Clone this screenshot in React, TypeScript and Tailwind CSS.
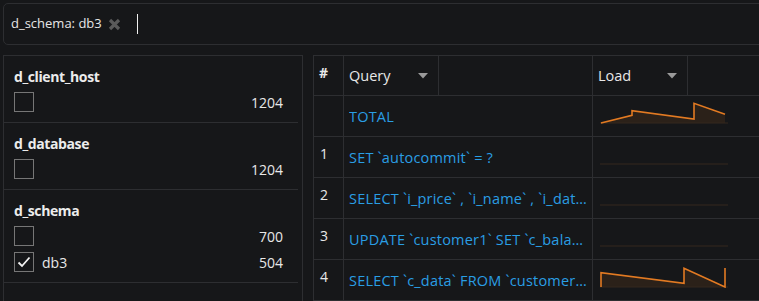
import React from "react";

const font = { fontFamily: '"Open Sans", "Noto Sans", sans-serif' };

type Facet = { title: string; rows: { label?: string; count: number; checked?: boolean }[] };

const facets: Facet[] = [
  { title: "d_client_host", rows: [{ count: 1204 }] },
  { title: "d_database", rows: [{ count: 1204 }] },
  { title: "d_schema", rows: [{ count: 700 }, { label: "db3", count: 504, checked: true }] },
];

type Row = { num?: number; query: string; line?: string; fill?: string };

const rows: Row[] = [
  {
    query: "TOTAL",
    line: "M2 21 L33 13.3 L33 8.7 L95 17 L95 1.3 L126 12.3",
    fill: "2,21 33,13.3 33,8.7 95,17 95,1.3 126,12.3 126,21",
  },
  { num: 1, query: "SET `autocommit` = ?" },
  { num: 2, query: "SELECT `i_price` , `i_name` , `i_data` FROM `item1` WHERE `i_id` = ?" },
  { num: 3, query: "UPDATE `customer1` SET `c_balance` = ? WHERE `c_w_id` = ?" },
  {
    num: 4,
    query: "SELECT `c_data` FROM `customer1` WHERE `c_w_id` = ?",
    line: "M2 21 L2 6.7 L85 17.3 L85 2.3 L126 21 L126 2",
    fill: "2,21 2,6.7 85,17.3 85,2.3 126,21",
  },
];

function Checkbox({ checked }: { checked?: boolean }) {
  return (
    <div className="w-[20px] h-[20px] border border-[#767676] flex items-center justify-center shrink-0">
      {checked && (
        <svg width="16" height="16" viewBox="0 0 16 16">
          <path d="M2.5 8.5 L6 12 L13.5 3.5" fill="none" stroke="#f2f2f2" strokeWidth="1.8" />
        </svg>
      )}
    </div>
  );
}

function Caret() {
  return (
    <svg width="10" height="6" viewBox="0 0 10 6" className="shrink-0">
      <path d="M0 0 L10 0 L5 5.5 Z" fill="#9a9a9a" />
    </svg>
  );
}

function Sparkline({ line, fill }: { line?: string; fill?: string }) {
  return (
    <svg width="130" height="22" viewBox="0 0 130 22" className="ml-[6px] mt-[6px]">
      {fill && <polygon points={fill} fill="#2b2119" />}
      <line x1="1" y1="21" x2="129" y2="21" stroke="#35291f" strokeWidth="1" />
      {line && <path d={line} fill="none" stroke="#e27a22" strokeWidth="1.6" strokeLinejoin="miter" />}
    </svg>
  );
}

export default function App() {
  return (
    <div className="w-[759px] h-[301px] overflow-hidden bg-[#161719] text-[#e8e8e8]" style={font}>
      {/* Filter bar */}
      <div className="ml-[3px] mt-[3px] w-[800px] h-[42px] border border-[#2d2e31] rounded-[5px] flex items-center pl-[7px]">
        <span className="text-[13px] text-[#e6e6e6]">d_schema: db3</span>
        <svg width="13" height="13" viewBox="0 0 13 13" className="ml-[6px]">
          <path d="M2 2 L11 11 M11 2 L2 11" stroke="#5a5a5a" strokeWidth="3.2" />
        </svg>
        <div className="ml-[16px] w-[1px] h-[20px] bg-[#f0f0f0]" />
      </div>

      <div className="flex mt-[10px] ml-[3px] gap-[10px]">
        {/* Facets panel */}
        <div className="w-[300px] h-[260px] border-l border-t border-r border-[#2d2e31] shrink-0">
          {facets.map((f) => (
            <div key={f.title} className="mr-[4px] border-b border-[#2d2e31] pl-[10px] pr-[15px] pt-[11px] pb-[10px]">
              <div className="text-[14px] leading-[20px] font-bold tracking-[-0.4px] text-[#ececec]">{f.title}</div>
              <div className="mt-[5px] flex flex-col gap-[6px]">
                {f.rows.map((r, i) => (
                  <div key={i} className="h-[20px] flex items-center">
                    <Checkbox checked={r.checked} />
                    {r.label && <span className="ml-[8px] text-[14px]">{r.label}</span>}
                    <span className="ml-auto text-[14px]">{r.count}</span>
                  </div>
                ))}
              </div>
            </div>
          ))}
        </div>

        {/* Queries table */}
        <div className="w-[500px] border-l border-t border-[#2d2e31] shrink-0 text-[14px]">
          <div className="flex h-[40px] border-b border-[#2d2e31]">
            <div className="w-[30px] border-r border-[#2d2e31] pl-[5px] pt-[7px] font-bold leading-[20px]">#</div>
            <div className="w-[95px] border-r border-[#2d2e31] pl-[5px] pr-[10px] flex items-center justify-between">
              <span className="text-[14.5px]">Query</span>
              <Caret />
            </div>
            <div className="w-[154px] border-r border-[#2d2e31]" />
            <div className="w-[95px] border-r border-[#2d2e31] pl-[5px] pr-[10px] flex items-center justify-between">
              <span className="text-[14.5px]">Load</span>
              <Caret />
            </div>
            <div className="flex-1" />
          </div>
          {rows.map((r) => (
            <div key={r.query} className="flex h-[41px] border-b border-[#2d2e31]">
              <div className="w-[30px] border-r border-[#2d2e31] pl-[6px] pt-[7px] leading-[20px]">{r.num ?? ""}</div>
              <div className="w-[249px] border-r border-[#2d2e31] pl-[5px] pr-[4px] flex items-center pt-[2px] min-w-0">
                <span className="truncate text-[14.5px] tracking-[0.2px] text-[#2a9ee4]">{r.query}</span>
              </div>
              <div className="flex-1">
                <Sparkline line={r.line} fill={r.fill} />
              </div>
            </div>
          ))}
        </div>
      </div>
    </div>
  );
}
